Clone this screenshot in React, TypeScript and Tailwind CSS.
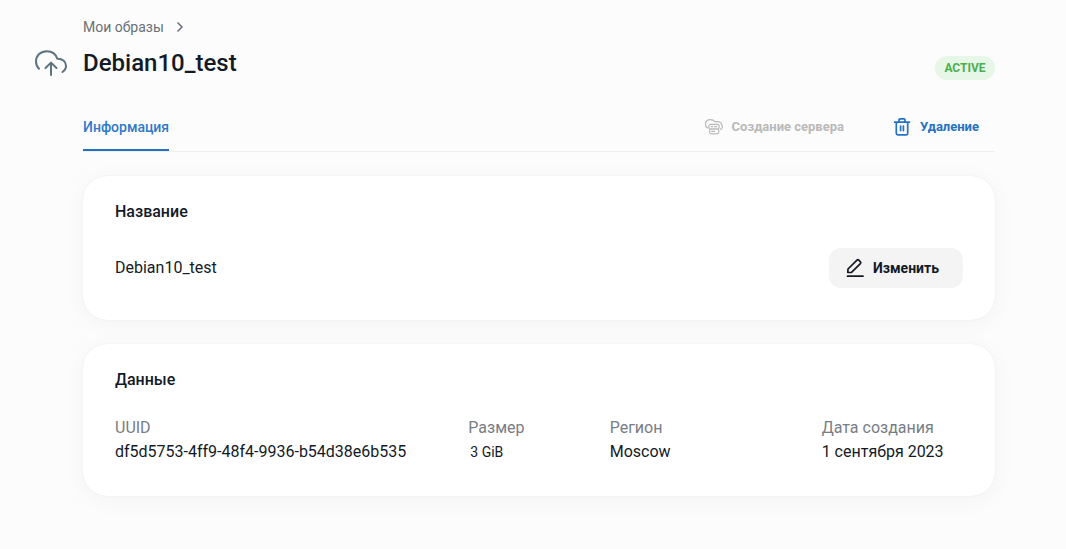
import type { ReactNode } from 'react';

function CloudUploadIcon() {
  return (
    <svg className="size-8 shrink-0" viewBox="0 0 32 32" fill="none" stroke="#5d737e" strokeWidth="2" strokeLinecap="round" strokeLinejoin="round" aria-hidden="true">
      <path d="M4 21.800C2 19.800 1 17.500 1 14.500C1 8.500 5.800 4.200 11.800 4.200C17 4.200 20.800 7 22.300 11.700C27.300 11.500 31 14.600 31 18.800C31 21.500 29.700 23.700 27.400 25" />
      <path d="M16 28V16M10.500 21L16 15.600L21.500 21" />
    </svg>
  );
}

function ChevronIcon() {
  return (
    <svg className="size-4" viewBox="0 0 16 16" fill="none" stroke="#6b7078" strokeWidth="1.500" aria-hidden="true">
      <path d="M5.500 3.500L10 8L5.500 12.500" />
    </svg>
  );
}

function CloudServerIcon() {
  return (
    <svg className="size-5" viewBox="0 0 20 20" fill="none" stroke="#b9b9b9" strokeWidth="1.200" strokeLinecap="round" strokeLinejoin="round" aria-hidden="true">
      <path d="M3.600 11C2.100 10.100 1.300 8.900 1.500 7.300C1 4.500 3.200 2.700 6.300 2.700C8.300 2.700 9.800 3.400 10.800 4.700C14.500 4.200 17 5.100 17.600 7.300C19 9.300 18.600 11.600 16.400 12.400" />
      <rect x="4.800" y="7.400" width="10.400" height="4.600" rx="1.800" />
      <rect x="5.600" y="12" width="9.200" height="4.800" rx="1.800" />
      <path d="M7.400 9.700H8.600M10.500 9.700H12.600M7.800 14.400H10.500" />
    </svg>
  );
}

function TrashIcon() {
  return (
    <svg className="size-5" viewBox="0 0 20 20" fill="none" stroke="#2470c2" strokeWidth="1.700" strokeLinecap="round" strokeLinejoin="round" aria-hidden="true">
      <path d="M2.600 5.200H17.400M4.300 5.200V16.300A1.500 1.500 0 0 0 5.800 17.800H14.200A1.500 1.500 0 0 0 15.700 16.300V5.200M7 5V2.900A1 1 0 0 1 8 1.900H12A1 1 0 0 1 13 2.900V5" />
      <path d="M8.600 9V13.600M11.400 9V13.600" />
    </svg>
  );
}

function PencilIcon() {
  return (
    <svg className="size-5" viewBox="0 0 20 20" fill="none" stroke="#131a26" strokeWidth="1.700" strokeLinecap="round" strokeLinejoin="round" aria-hidden="true">
      <path d="M2.800 14.500L3 11L12 2.200A1.300 1.300 0 0 1 13.800 2.200L15.400 3.800A1.300 1.300 0 0 1 15.400 5.600L6.500 14.400Z" />
      <path d="M2.500 18.200H18" />
    </svg>
  );
}

function Card({ title, children }: { title: string; children: ReactNode }) {
  return (
    <section className="rounded-3xl bg-white p-8 pt-6 shadow-[0_0_1px_rgba(0,0,0,0.12),0_4px_24px_rgba(0,0,0,0.04)]">
      <h2 className="text-base leading-6 font-medium">{title}</h2>
      {children}
    </section>
  );
}

function Field({ label, className, children }: { label: string; className: string; children: ReactNode }) {
  return (
    <div className={className}>
      <dt className="text-[#787d85]">{label}</dt>
      <dd>{children}</dd>
    </div>
  );
}

export default function App() {
  return (
    <main className="min-h-screen bg-[#fcfcfc] pt-[15px] pr-[71px] pb-12 pl-[35px] font-['Roboto',sans-serif] text-base leading-6 text-[#131a26]">
      <nav aria-label="Навигация" className="flex h-6 items-center gap-2 pl-12 text-sm text-[#6b7078]">
        <a href="#images">Мои образы</a>
        <ChevronIcon />
      </nav>

      <header className="mt-2 flex h-[33px] gap-4">
        <CloudUploadIcon />
        <h1 className="flex-1 text-2xl leading-8 font-medium">Debian10_test</h1>
        <span className="h-6 min-w-15 self-end rounded-full bg-[#e6f6e7] px-2 text-center text-xs leading-6 font-bold text-[#4caf50]">ACTIVE</span>
      </header>

      <div className="pl-12">
        <div className="mt-6 flex h-12 justify-between border-b border-[#efefef]">
          <a href="#info" aria-current="page" className="border-b-2 border-[#2470c2] text-sm leading-[46px] font-medium text-[#2e79cb]">
            Информация
          </a>
          <div className="flex items-center gap-12 pr-4 pb-0.5 text-[13px] font-bold">
            <button type="button" disabled className="flex items-center gap-2 text-[#b9b9b9]">
              <CloudServerIcon />
              Создание сервера
            </button>
            <button type="button" className="flex items-center gap-2 text-[#2470c2]">
              <TrashIcon />
              Удаление
            </button>
          </div>
        </div>

        <div className="mt-6 flex flex-col gap-6">
          <Card title="Название">
            <div className="mt-6 flex items-center justify-between">
              <p>Debian10_test</p>
              <button type="button" className="flex h-10 items-center gap-2 rounded-xl bg-[#f4f4f4] pr-6 pl-4 text-sm font-bold">
                <PencilIcon />
                Изменить
              </button>
            </div>
          </Card>

          <Card title="Данные">
            <dl className="mt-6 grid grid-cols-12">
              <Field label="UUID" className="col-span-5">df5d5753-4ff9-48f4-9936-b54d38e6b535</Field>
              <Field label="Размер" className="col-span-2">
                <span className="pl-0.5 text-sm">3 GiB</span>
              </Field>
              <Field label="Регион" className="col-span-3">Moscow</Field>
              <Field label="Дата создания" className="col-span-2 whitespace-nowrap">1 сентября 2023</Field>
            </dl>
          </Card>
        </div>
      </div>
    </main>
  );
}
